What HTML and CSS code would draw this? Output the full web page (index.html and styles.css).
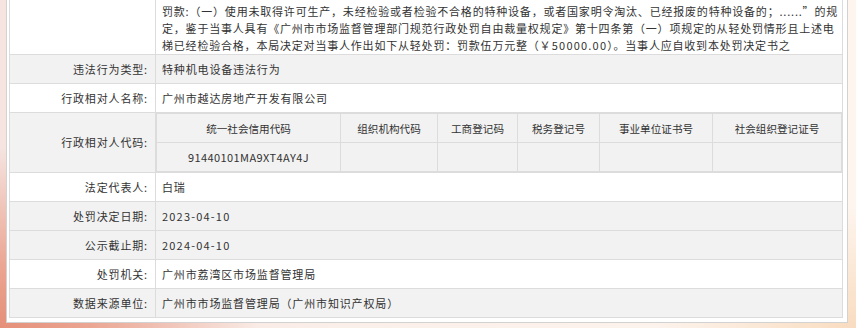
FILE: index.html
```
<!DOCTYPE html>
<html lang="zh-CN">
<head>
<meta charset="utf-8">
<title>行政处罚信息</title>
<link rel="stylesheet" href="styles.css">
</head>
<body>
<div class="page">
  <div class="panel">
    <table class="info">
      <colgroup><col class="col-label"><col></colgroup>
      <tr class="row-white first">
        <th></th>
        <td class="para-cell"><div class="para"><span class="line">罚款:（一）使用未取得许可生产，未经检验或者检验不合格的特种设备，或者国家明令淘汰、已经报废的特种设备的；......”的规</span><span class="line">定，鉴于当事人具有《广州市市场监督管理部门规范行政处罚自由裁量权规定》第十四条第（一）项规定的从轻处罚情形且上述电</span><span class="line">梯已经检验合格，本局决定对当事人作出如下从轻处罚：罚款伍万元整（<span class="num">￥50000.00</span>）。当事人应自收到本处罚决定书之</span></div></td>
      </tr>
      <tr class="row-gray">
        <th>违法行为类型:</th>
        <td>特种机电设备违法行为</td>
      </tr>
      <tr class="row-white">
        <th>行政相对人名称:</th>
        <td>广州市越达房地产开发有限公司</td>
      </tr>
      <tr class="row-gray">
        <th>行政相对人代码:</th>
        <td class="nested-cell">
          <table class="codes">
            <colgroup>
              <col class="w1"><col class="w2"><col class="w3"><col class="w4"><col class="w5"><col>
            </colgroup>
            <tr class="codes-head">
              <th>统一社会信用代码</th><th>组织机构代码</th><th>工商登记码</th><th>税务登记号</th><th>事业单位证书号</th><th>社会组织登记证号</th>
            </tr>
            <tr class="codes-data">
              <td>91440101MA9XT4AY4J</td><td></td><td></td><td></td><td></td><td></td>
            </tr>
          </table>
        </td>
      </tr>
      <tr class="row-white">
        <th>法定代表人:</th>
        <td>白瑞</td>
      </tr>
      <tr class="row-gray">
        <th>处罚决定日期:</th>
        <td class="num">2023-04-10</td>
      </tr>
      <tr class="row-gray">
        <th>公示截止期:</th>
        <td class="num">2024-04-10</td>
      </tr>
      <tr class="row-white">
        <th>处罚机关:</th>
        <td>广州市荔湾区市场监督管理局</td>
      </tr>
      <tr class="row-gray">
        <th>数据来源单位:</th>
        <td>广州市市场监督管理局（广州市知识产权局）</td>
      </tr>
    </table>
  </div>
</div>
</body>
</html>
```
FILE: styles.css
```
* { box-sizing: border-box; }

html, body {
  margin: 0;
  padding: 0;
}

body {
  width: 856px;
  height: 328px;
  overflow: hidden;
  font-family: "Noto Sans CJK SC", "Noto Sans", sans-serif;
  color: #333;
  background:
    radial-gradient(ellipse 260px 180px at 0% 100%, #e58f79 0%, #eba693 35%, rgba(246, 226, 218, 0) 100%),
    radial-gradient(ellipse 200px 120px at 100% 100%, #f9dcc0 0%, rgba(252, 240, 230, 0) 100%),
    linear-gradient(to right, #f5e4e0 0%, #fbefe9 40%, #fdf5ee 100%);
}

.page {
  padding: 0 8px 5px 6px;
}

.panel {
  background: #fff;
  border: 1px solid #d2d2d2;
  border-top: none;
  padding: 0 4px 4px 2px;
}

.info {
  width: 834px;
  border-collapse: collapse;
  table-layout: fixed;
  font-size: 11px;
  letter-spacing: 0.85px;
}

.col-label { width: 146px; }

.info > tbody > tr > th,
.info > tbody > tr > td {
  border: 1px solid #dcdcdc;
  height: 29px;
  padding: 0 6px;
  vertical-align: middle;
  line-height: 17px;
}

.info > tbody > tr > th {
  text-align: right;
  font-weight: normal;
  padding-right: 7px;
}

.info > tbody > tr > td {
  text-align: left;
  padding-left: 6px;
}

.info > tbody > tr > td.num,
.para .num {
  letter-spacing: 1.2px;
}

.row-white { background: #fff; }
.row-gray { background: #f2f2f2; }

.info > tbody > tr.first > th,
.info > tbody > tr.first > td {
  border-top: none;
  height: 54px;
  padding-top: 3px;
  vertical-align: top;
}

.para {
  white-space: nowrap;
  letter-spacing: 0.8px;
}

.line { display: block; }

.info > tbody > tr > td.nested-cell {
  padding: 0;
  height: 60px;
}

.codes {
  width: 686px;
  border-collapse: collapse;
  table-layout: fixed;
  background: #f2f2f2;
  letter-spacing: 0;
}

.w1 { width: 184px; }
.w2 { width: 97px; }
.w3 { width: 80px; }
.w4 { width: 82px; }
.w5 { width: 113px; }

.codes th,
.codes td {
  border: 1px solid #dcdcdc;
  height: 29px;
  padding: 0;
  text-align: center;
  vertical-align: middle;
  font-weight: normal;
}

.codes th {
  font-size: 10.6px;
}

.codes td {
  font-size: 11px;
  letter-spacing: 0.4px;
}
```
